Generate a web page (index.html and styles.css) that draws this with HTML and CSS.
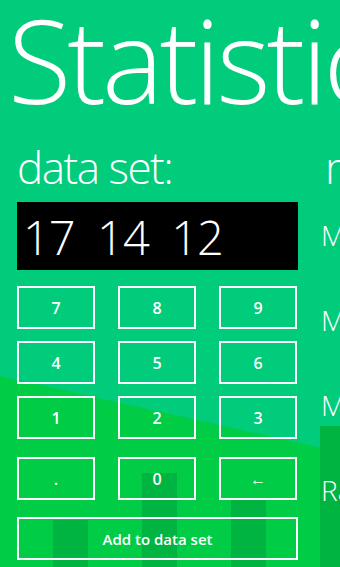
FILE: index.html
```html
<!DOCTYPE html>
<html>
<head>
<meta charset="utf-8">
<link rel="stylesheet" href="styles.css">
</head>
<body>
<div class="backdrop">
  <svg width="340" height="567" viewBox="0 0 340 567">
    <polygon points="0,376 340,452 340,567 0,567" fill="#00cc46"/>
    <rect x="53" y="520" width="35" height="47" fill="#00b442"/>
    <rect x="142" y="473" width="35" height="94" fill="#00b442"/>
    <rect x="231" y="498" width="35" height="69" fill="#00b442"/>
    <rect x="320" y="426" width="35" height="141" fill="#00b442"/>
  </svg>
</div>
<div class="app">
  <h1 class="title">Statistics</h1>
  <div class="panels">
    <section class="panel panel-input">
      <h2 class="heading">data set:</h2>
      <div class="display">17  14  12</div>
      <div class="keys">
        <div class="key-row">
          <button class="key">7</button>
          <button class="key">8</button>
          <button class="key">9</button>
        </div>
        <div class="key-row">
          <button class="key">4</button>
          <button class="key">5</button>
          <button class="key">6</button>
        </div>
        <div class="key-row">
          <button class="key">1</button>
          <button class="key">2</button>
          <button class="key">3</button>
        </div>
        <div class="key-row key-row-spaced">
          <button class="key">.</button>
          <button class="key">0</button>
          <button class="key">&#8592;</button>
        </div>
      </div>
      <button class="add">Add to data set</button>
    </section>
    <section class="panel panel-results">
      <h2 class="heading heading-results">measures:</h2>
      <div class="stat">Mean</div>
      <div class="stat">Median</div>
      <div class="stat">Mode</div>
      <div class="stat">Range</div>
    </section>
  </div>
</div>
</body>
</html>
```
FILE: styles.css
```css
html, body {
  margin: 0;
  padding: 0;
}
body {
  width: 340px;
  height: 567px;
  overflow: hidden;
  background: #00cc7b;
  color: #ffffff;
  font-family: "Open Sans", "Liberation Sans", sans-serif;
  position: relative;
}
.backdrop {
  position: absolute;
  left: 0;
  top: 0;
  width: 340px;
  height: 567px;
}
.backdrop svg {
  display: block;
}
.app {
  position: relative;
  width: 700px;
}
.title {
  margin: 1px 0 0 8px;
  font-size: 116px;
  font-weight: 300;
  line-height: 116px;
  white-space: nowrap;
  letter-spacing: -4px;
}
.panels {
  display: flex;
  margin-top: 28px;
}
.panel {
  display: flex;
  flex-direction: column;
}
.panel-input {
  width: 303px;
  padding-left: 17px;
}
.panel-results {
  padding-left: 1px;
}
.heading {
  margin: 0;
  font-size: 44px;
  font-weight: 300;
  line-height: 44px;
  white-space: nowrap;
  letter-spacing: -1.5px;
}
.heading-results {
  padding-left: 4px;
  margin-bottom: 32px;
}
.display {
  margin-top: 13px;
  width: 281px;
  height: 68px;
  box-sizing: border-box;
  background: #000000;
  padding: 12px 0 0 6px;
  font-size: 47px;
  font-weight: 300;
  line-height: 47px;
  letter-spacing: -1px;
  white-space: pre;
}
.keys {
  margin-top: 16px;
  width: 280px;
  display: flex;
  flex-direction: column;
  gap: 12px;
}
.key-row {
  display: flex;
  gap: 23px;
}
.key-row-spaced {
  margin-top: 6px;
}
.key, .add {
  box-sizing: border-box;
  border: 2px solid #ffffff;
  background: transparent;
  color: #ffffff;
  font-family: "Open Sans", "Liberation Sans", sans-serif;
  font-weight: 600;
  padding: 0;
  margin: 0;
  display: flex;
  align-items: center;
  justify-content: center;
}
.key {
  width: 78px;
  height: 43px;
  font-size: 16px;
}
.add {
  margin-top: 17px;
  width: 281px;
  height: 43px;
  font-size: 15px;
}
.stat {
  height: 85px;
  font-size: 28px;
  font-weight: 300;
  line-height: 28px;
  white-space: nowrap;
}
```
